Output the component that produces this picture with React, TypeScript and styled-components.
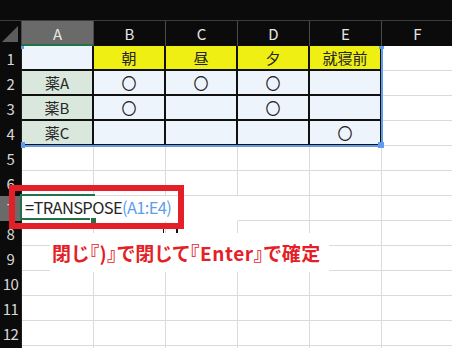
import styled, { createGlobalStyle } from 'styled-components';

const GlobalStyle = createGlobalStyle`
  html, body {
    margin: 0;
    padding: 0;
    background: #fff;
  }
  body {
    font-family: 'Noto Sans CJK JP', 'Noto Sans', sans-serif;
  }
`;

type Fill = 'none' | 'blue' | 'yellow' | 'green';

const COLS = ['A', 'B', 'C', 'D', 'E', 'F'];

const TABLE: string[][] = [
  ['', '朝', '昼', '夕', '就寝前'],
  ['薬A', '〇', '〇', '〇', ''],
  ['薬B', '〇', '', '〇', ''],
  ['薬C', '', '', '', '〇'],
];

const FILLS: Record<Fill, string> = {
  none: '#ffffff',
  blue: '#eef4fc',
  yellow: '#efef13',
  green: '#d9e7dc',
};

const fillFor = (row: number, col: number): Fill => {
  if (row > 4 || col > 4) return 'none';
  if (row === 1) return col === 0 ? 'blue' : 'yellow';
  return col === 0 ? 'green' : 'blue';
};

const App = () => {
  const rows = Array.from({ length: 13 }, (_, i) => i + 1);

  return (
    <Page>
      <GlobalStyle />
      <TopBar />
      <HeaderRow>
        <Corner>
          <svg width='21' height='25' viewBox='0 0 21 25'>
            <polygon points='2,21 18,21 18,5' fill='#5c5c5c' />
          </svg>
        </Corner>
        {COLS.map((c, i) => (
          <ColHead key={c} $active={i === 0}>
            {c}
          </ColHead>
        ))}
      </HeaderRow>

      {rows.map((r) => (
        <Row key={r}>
          {/* row 13 only peeks in at the bottom edge, its number is out of view */}
          <RowHead $active={r === 7}>{r < 13 ? r : ''}</RowHead>
          {COLS.map((c, ci) => {
            const inTable = r <= 4 && ci <= 4;
            const text = inTable ? TABLE[r - 1][ci] : '';
            if (r === 7 && ci === 0) {
              return (
                <ActiveCell key={c}>
                  <Formula>
                    =TRANSPOSE<Ref>(A1:E4)</Ref>
                  </Formula>
                </ActiveCell>
              );
            }
            const overflowed = r === 7 && (ci === 1 || ci === 2);
            return (
              <Cell
                key={c}
                $fill={fillFor(r, ci)}
                $table={inTable}
                $hidden={overflowed}
              >
                {text}
              </Cell>
            );
          })}
        </Row>
      ))}

      <RangeBox>
        <Handle $x={-1} $y={-1} $w={3} $h={3} />
        <Handle $x={357} $y={-1} $w={5} $h={3} />
        <Handle $x={-1} $y={95} $w={4} $h={6} />
        <Handle $x={356} $y={95} $w={6} $h={6} />
      </RangeBox>

      <CalloutBox />
      <Tick $x={163} $w={1} />
      <Tick $x={176} $w={2} />

      <Caption>閉じ『)』で閉じて『Enter』で確定</Caption>
    </Page>
  );
};

const Page = styled.div`
  position: relative;
  width: 452px;
  height: 348px;
  overflow: hidden;
  background: #fff;
`;

const TopBar = styled.div`
  height: 20px;
  background: #0b0b0b;
`;

const HeaderRow = styled.div`
  display: grid;
  grid-template-columns: 22px repeat(6, 72px);
  height: 26px;
  box-sizing: border-box;
  border-top: 1px solid #3c3c3c;
  background: #0b0b0b;
`;

const Corner = styled.div`
  display: flex;
  align-items: flex-start;
  border-right: 1px solid #4a4a4a;
  box-sizing: border-box;
`;

const ColHead = styled.div<{ $active: boolean }>`
  display: flex;
  align-items: center;
  justify-content: center;
  box-sizing: border-box;
  border-right: 1px solid #4a4a4a;
  background: ${(p) => (p.$active ? '#6a6a6a' : '#0b0b0b')};
  box-shadow: ${(p) => (p.$active ? 'inset 0 -2px 0 #217346' : 'none')};
  color: #e6e6e6;
  font-size: 15px;
  padding-bottom: 1px;
`;

const Row = styled.div`
  display: grid;
  grid-template-columns: 22px repeat(6, 72px);
  height: 25px;
`;

const RowHead = styled.div<{ $active: boolean }>`
  display: flex;
  align-items: center;
  justify-content: center;
  box-sizing: border-box;
  border-right: 1px solid #1e1e1e;
  background: ${(p) => (p.$active ? '#6a6a6a' : '#0b0b0b')};
  color: #d8d8d8;
  font-size: 15px;
  letter-spacing: -0.5px;
`;

const Cell = styled.div<{ $fill: Fill; $table: boolean; $hidden: boolean }>`
  display: flex;
  align-items: center;
  justify-content: center;
  box-sizing: border-box;
  background: ${(p) => FILLS[p.$fill]};
  border-right: ${(p) =>
    p.$hidden ? 'none' : p.$table ? '2px solid #101010' : '1px solid #dadada'};
  border-bottom: ${(p) =>
    p.$hidden ? 'none' : p.$table ? '2px solid #101010' : '1px solid #dadada'};
  color: #262626;
  font-size: 15px;
  white-space: nowrap;
`;

const ActiveCell = styled.div`
  position: relative;
  z-index: 2;
  display: flex;
  align-items: center;
  box-sizing: border-box;
  background: #fff;

  &::before {
    content: '';
    position: absolute;
    top: -2px;
    left: -2px;
    width: 75px;
    height: 26px;
    box-sizing: border-box;
    border: 2px solid #217346;
    border-right: none;
  }

  &::after {
    content: '';
    position: absolute;
    left: 68px;
    top: 21px;
    width: 5px;
    height: 5px;
    background: #217346;
    border: 1px solid #fff;
  }
`;

const Formula = styled.span`
  position: relative;
  padding-left: 3px;
  margin-top: -3px;
  font-size: 16.5px;
  letter-spacing: -0.65px;
  color: #262626;
  white-space: nowrap;
`;

const Ref = styled.span`
  color: #5e9ded;
`;

const RangeBox = styled.div`
  position: absolute;
  left: 21px;
  top: 46px;
  width: 362px;
  height: 101px;
  box-sizing: border-box;
  border-right: 2px solid #5e9cf0;
  border-bottom: 2px solid #5e9cf0;
  pointer-events: none;
`;

const Handle = styled.span<{ $x: number; $y: number; $w: number; $h: number }>`
  position: absolute;
  left: ${(p) => p.$x + 1}px;
  top: ${(p) => p.$y + 1}px;
  width: ${(p) => p.$w}px;
  height: ${(p) => p.$h}px;
  background: #5e9cf0;
`;

const CalloutBox = styled.div`
  position: absolute;
  left: 9px;
  top: 185px;
  width: 175px;
  height: 44px;
  box-sizing: border-box;
  border: 6px solid #e51f27;
  z-index: 3;
`;

const Tick = styled.span<{ $x: number; $w: number }>`
  position: absolute;
  left: ${(p) => p.$x}px;
  top: 229px;
  width: ${(p) => p.$w}px;
  height: 5px;
  background: #111;
`;

const Caption = styled.div`
  position: absolute;
  left: 50px;
  top: 233px;
  width: 279px;
  height: 39px;
  box-sizing: border-box;
  padding-left: 2px;
  display: flex;
  align-items: center;
  background: #fff;
  color: #e51f27;
  font-size: 19px;
  font-weight: 700;
  font-feature-settings: 'palt';
  letter-spacing: 0.6px;
  white-space: nowrap;
`;

export default App;
